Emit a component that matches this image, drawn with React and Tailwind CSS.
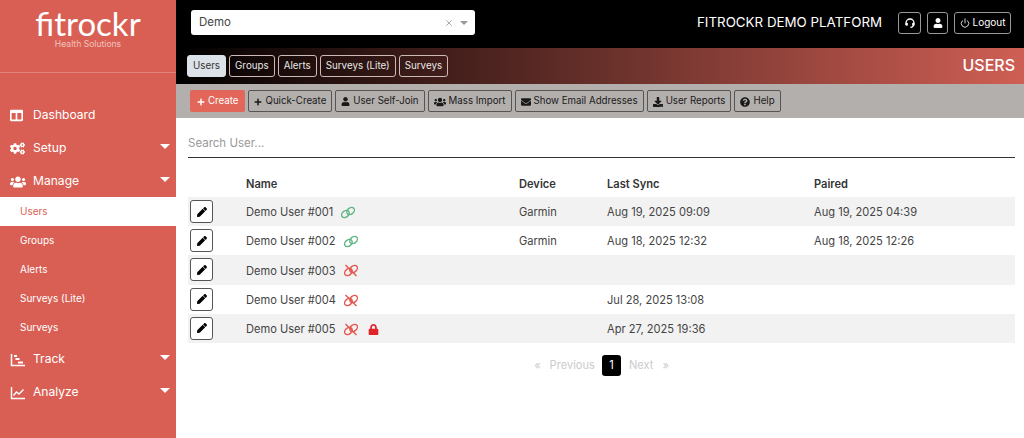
import {
  FaCogs,
  FaColumns,
  FaDownload,
  FaEnvelope,
  FaLock,
  FaPen,
  FaPlus,
  FaQuestionCircle,
  FaUser,
  FaUsers,
} from "react-icons/fa";
import { FiPower, FiX } from "react-icons/fi";

const Caret = () => (
  <span className="ml-auto mr-[4px] h-0 w-0 -translate-y-[2px] border-x-[5px] border-t-[5px] border-x-transparent border-t-white" />
);

const TrackIcon = () => (
  <svg width="16" height="14" viewBox="0 0 16 14" fill="none" stroke="white">
    <path d="M1.5 1v11.5H15" strokeWidth="1.5" />
    <path d="M4 3h3M5.5 6h4M8 9.5h5" strokeWidth="1.8" />
  </svg>
);

const AnalyzeIcon = () => (
  <svg width="16" height="14" viewBox="0 0 16 14" fill="none" stroke="white" strokeWidth="1.4">
    <path d="M1.5 1v11.5H15" />
    <path d="M3.5 9.5l3-3.5 2.5 2 4.5-4.5" />
  </svg>
);

const HeadsetIcon = () => (
  <svg width="12" height="12" viewBox="0 0 12 12" fill="none" stroke="white" strokeWidth="1.3">
    <path d="M2 8V6a4 4 0 0 1 8 0c0 2.5-1 4-3.5 4.5" />
    <rect x="1.5" y="5.8" width="2.4" height="3" rx="1" fill="white" stroke="none" />
    <rect x="8.1" y="5.8" width="2.4" height="3" rx="1" fill="white" stroke="none" />
  </svg>
);

const LinkIcon = ({ broken }) => (
  <svg
    width="16"
    height="13"
    viewBox="0 0 16 13"
    fill="none"
    stroke="currentColor"
    strokeWidth="1.4"
    className={broken ? "text-[#e4574e]" : "text-[#5fb585]"}
  >
    <ellipse cx="5.4" cy="8" rx="4.2" ry="3.1" transform="rotate(-40 5.4 8)" />
    <ellipse cx="10.6" cy="5" rx="4.2" ry="3.1" transform="rotate(-40 10.6 5)" />
    {broken && <path d="M2.5 1l11 11" />}
  </svg>
);

const MainItem = ({ icon, label, caret }) => (
  <div className="flex h-[33px] items-center pl-[10px] pr-[2px] pt-[2px] text-[12.1px] text-white">
    <span className="flex w-[23px] items-center justify-start">{icon}</span>
    <span>{label}</span>
    {caret && <Caret />}
  </div>
);

const SubItem = ({ label, active }) => (
  <div
    className={`flex h-[29px] items-center pl-[20px] text-[10px] ${
      active ? "bg-white text-[#d95f54]" : "text-white"
    }`}
  >
    {label}
  </div>
);

const Sidebar = () => (
  <div className="flex h-full w-[176px] shrink-0 flex-col bg-[#d95f54]">
    <div className="flex h-[73px] flex-col items-center border-b border-[#e4837a] pt-[7px] text-white">
      <span className="font-['Lato'] text-[33px] leading-[32px]">fitrockr</span>
      <span className="text-[8.6px] leading-[10px] text-[#f3c4be]">Health Solutions</span>
    </div>
    <div className="pt-[25px]">
      <MainItem icon={<FaColumns className="text-[13px]" />} label="Dashboard" />
      <MainItem icon={<FaCogs className="text-[15px]" />} label="Setup" caret />
      <MainItem icon={<FaUsers className="text-[16px]" />} label="Manage" caret />
      <SubItem label="Users" active />
      <SubItem label="Groups" />
      <SubItem label="Alerts" />
      <SubItem label="Surveys (Lite)" />
      <SubItem label="Surveys" />
      <MainItem icon={<TrackIcon />} label="Track" caret />
      <MainItem icon={<AnalyzeIcon />} label="Analyze" caret />
    </div>
  </div>
);

const Tab = ({ label, active }) => (
  <div
    className={`flex h-[22px] items-center rounded-[3px] border px-[5px] pt-[1px] text-[9.8px] ${
      active ? "border-[#dde2e8] bg-[#dde2e8] text-[#333]" : "border-[#cdbab6] text-[#e8e8e8]"
    }`}
  >
    {label}
  </div>
);

const ToolButton = ({ icon, label }) => (
  <div className="flex h-[22px] items-center gap-[3px] rounded-[2px] border border-[#555] px-[5px] pt-[1px] text-[9.7px] text-[#1a1a1a]">
    {icon}
    <span>{label}</span>
  </div>
);

const TopButton = ({ children }) => (
  <div className="flex h-[22px] items-center gap-[3px] rounded-[3px] border border-[#999] px-[4.5px] text-[10px] text-white">
    {children}
  </div>
);

const users = [
  { name: "Demo User #001", linked: true, device: "Garmin", sync: "Aug 19, 2025 09:09", paired: "Aug 19, 2025 04:39" },
  { name: "Demo User #002", linked: true, device: "Garmin", sync: "Aug 18, 2025 12:32", paired: "Aug 18, 2025 12:26" },
  { name: "Demo User #003", linked: false, device: "", sync: "", paired: "" },
  { name: "Demo User #004", linked: false, device: "", sync: "Jul 28, 2025 13:08", paired: "" },
  { name: "Demo User #005", linked: false, locked: true, device: "", sync: "Apr 27, 2025 19:36", paired: "" },
];

const rowGrid = "grid grid-cols-[58px_273px_88px_207px_1fr] items-center";

const App = () => {
  return (
    <div className="flex h-[438px] w-[1024px] overflow-hidden bg-white font-['Inter',sans-serif]">
      <Sidebar />
      <div className="flex min-w-0 flex-1 flex-col">
        {/* top bar */}
        <div className="flex h-[48px] items-center bg-black pl-[15px] pr-[13px] pb-[3px]">
          <div className="flex h-[25px] w-[284px] items-center rounded-[3px] bg-white pl-[8px] pr-[7px] pt-[1px] text-[11.5px] text-[#444]">
            <span>Demo</span>
            <FiX className="ml-auto text-[10px] text-[#999]" />
            <span className="ml-[6px] h-0 w-0 border-x-[4px] border-t-[4px] border-x-transparent border-t-[#999]" />
          </div>
          <span className="ml-auto text-[13.35px] text-white">FITROCKR DEMO PLATFORM</span>
          <div className="ml-[16px] flex items-center gap-[6px]">
            <TopButton>
              <HeadsetIcon />
            </TopButton>
            <TopButton>
              <FaUser className="text-[10px]" />
            </TopButton>
            <TopButton>
              <FiPower className="text-[10px]" />
              Logout
            </TopButton>
          </div>
        </div>

        {/* tabs */}
        <div className="flex h-[36px] items-center gap-[3px] bg-linear-to-r/srgb from-black to-[#cf5f54] pl-[11px] pr-[9px] pb-[1px]">
          <Tab label="Users" active />
          <Tab label="Groups" />
          <Tab label="Alerts" />
          <Tab label="Surveys (Lite)" />
          <Tab label="Surveys" />
          <span className="ml-auto pb-[2px] text-[16px] font-medium text-white">USERS</span>
        </div>

        {/* toolbar */}
        <div className="flex h-[34px] items-center gap-[3px] bg-[#b3afad] pl-[14px]">
          <div className="flex h-[22px] items-center gap-[3px] rounded-[2px] bg-[#e2665a] px-[7px] pt-[1px] text-[9.7px] text-white">
            <FaPlus className="text-[8px]" />
            Create
          </div>
          <ToolButton icon={<FaPlus className="text-[8px]" />} label="Quick-Create" />
          <ToolButton icon={<FaUser className="text-[9px]" />} label="User Self-Join" />
          <ToolButton icon={<FaUsers className="text-[12px]" />} label="Mass Import" />
          <ToolButton icon={<FaEnvelope className="text-[10px]" />} label="Show Email Addresses" />
          <ToolButton icon={<FaDownload className="text-[10px]" />} label="User Reports" />
          <ToolButton icon={<FaQuestionCircle className="text-[10px]" />} label="Help" />
        </div>

        {/* content */}
        <div className="pl-[12px] pr-[9px] pt-[10px]">
          <div className="flex h-[30px] items-center border-b border-[#333] pt-[2px] text-[11.5px] text-[#999]">
            Search User...
          </div>
          <div className={`${rowGrid} mt-[10px] h-[29px] pt-[3px] text-[11.1px] font-semibold text-[#333]`}>
            <span />
            <span>Name</span>
            <span>Device</span>
            <span>Last Sync</span>
            <span>Paired</span>
          </div>
          {users.map((u, i) => (
            <div
              key={u.name}
              className={`${rowGrid} h-[29.2px] text-[11.1px] text-[#444] ${i % 2 === 0 ? "bg-[#f2f2f2]" : "bg-white"}`}
            >
              <div className="pl-[2px]">
                <div className="flex h-[23px] w-[23px] items-center justify-center rounded-[3px] border border-[#555] bg-white">
                  <FaPen className="text-[10px] text-black" />
                </div>
              </div>
              <div className="flex items-center pt-[2px]">
                <span>{u.name}</span>
                <span className="ml-[7px]">
                  <LinkIcon broken={!u.linked} />
                </span>
                {u.locked && <FaLock className="ml-[9px] text-[11px] text-[#e0242c]" />}
              </div>
              <span className="pt-[2px]">{u.device}</span>
              <span className="pt-[2px]">{u.sync}</span>
              <span className="pt-[2px]">{u.paired}</span>
            </div>
          ))}
          <div className="mt-[12px] flex items-center justify-center text-[11.1px] text-[#ccc]">
            <span>«</span>
            <span className="ml-[9px]">Previous</span>
            <span className="ml-[7px] flex h-[21px] w-[19px] items-center justify-center rounded-[3px] bg-black text-white">
              1
            </span>
            <span className="ml-[8px]">Next</span>
            <span className="ml-[9px]">»</span>
          </div>
        </div>
      </div>
    </div>
  );
};

export default App;
